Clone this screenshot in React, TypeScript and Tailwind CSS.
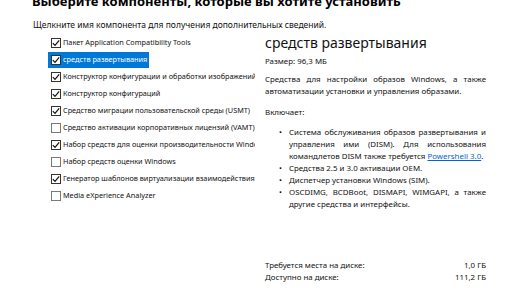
const items = [
  { label: "Пакет Application Compatibility Tools", checked: true },
  { label: "средств развертывания", checked: true, selected: true },
  { label: "Конструктор конфигурации и обработки изображений", checked: true },
  { label: "Конструктор конфигураций", checked: true },
  { label: "Средство миграции пользовательской среды (USMT)", checked: true },
  { label: "Средство активации корпоративных лицензий (VAMT)", checked: false },
  { label: "Набор средств для оценки производительности Windows", checked: true },
  { label: "Набор средств оценки Windows", checked: false },
  { label: "Генератор шаблонов виртуализации взаимодействия", checked: true },
  { label: "Media eXperience Analyzer", checked: false },
];

function Box({ checked }: { checked: boolean }) {
  return (
    <span
      className={
        "flex h-[10px] w-[10px] shrink-0 items-center justify-center border bg-white " +
        (checked ? "border-[#333]" : "border-[#7a7a7a]")
      }
    >
      {checked && (
        <svg width="8" height="8" viewBox="0 0 8 8">
          <path d="M0.8 4.1 L3 6.3 L7.2 1.3" fill="none" stroke="#111" strokeWidth="1.2" />
        </svg>
      )}
    </span>
  );
}

function Bullet({ children, justify }: { children: React.ReactNode; justify?: boolean }) {
  return (
    <li className="flex">
      <span className="w-[24px] shrink-0 pl-[14px]">•</span>
      <span className={justify ? "text-justify" : ""}>{children}</span>
    </li>
  );
}

export default function App() {
  return (
    <div className="h-[290px] w-[516px] overflow-hidden bg-white font-['Noto_Sans',sans-serif] text-[#111]">
      <h1 className="-mt-[7px] whitespace-nowrap pl-[32px] text-[13px] font-bold leading-[16px] text-black">
        Выберите компоненты, которые вы хотите установить
      </h1>
      <p className="mt-[10px] pl-[33px] text-[8.5px] leading-[12px]">
        Щелкните имя компонента для получения дополнительных сведений.
      </p>

      <div className="mt-[3px] flex h-[249px]">
        <div className="ml-[48px] w-[207px] overflow-hidden">
          {items.map((it) => (
            <div key={it.label} className="flex h-[17px] items-center">
              <div
                className={
                  "flex h-[16px] items-center gap-[2px] whitespace-nowrap pl-[3px] pr-[2px] text-[7.3px] " +
                  (it.selected ? "bg-[#0078d7] text-white" : "")
                }
              >
                <Box checked={it.checked} />
                <span>{it.label}</span>
              </div>
            </div>
          ))}
        </div>

        <div className="ml-[10px] flex w-[221px] flex-col text-[7.9px] leading-[12px]">
          <h2 className="text-[14px] leading-[18px]">средств развертывания</h2>
          <p className="mt-[3px]">Размер: 96,3 МБ</p>
          <p className="mt-[6px] text-justify">
            Средства для настройки образов Windows, а также автоматизации установки и управления образами.
          </p>
          <p className="mt-[9px]">Включает:</p>
          <ul className="mt-[8px]">
            <Bullet justify>
              Система обслуживания образов развертывания и управления ими (DISM). Для использования
              командлетов DISM также требуется{" "}
              <span className="text-[#0066cc] underline">Powershell 3.0</span>.
            </Bullet>
            <Bullet>Средства 2.5 и 3.0 активации OEM.</Bullet>
            <Bullet>Диспетчер установки Windows (SIM).</Bullet>
            <Bullet justify>OSCDIMG, BCDBoot, DISMAPI, WIMGAPI, а также другие средства и интерфейсы.</Bullet>
          </ul>

          <div className="mt-auto">
            <div className="flex justify-between">
              <span>Требуется места на диске:</span>
              <span>1,0 ГБ</span>
            </div>
            <div className="flex justify-between">
              <span>Доступно на диске:</span>
              <span>111,2 ГБ</span>
            </div>
          </div>
        </div>
      </div>
    </div>
  );
}
